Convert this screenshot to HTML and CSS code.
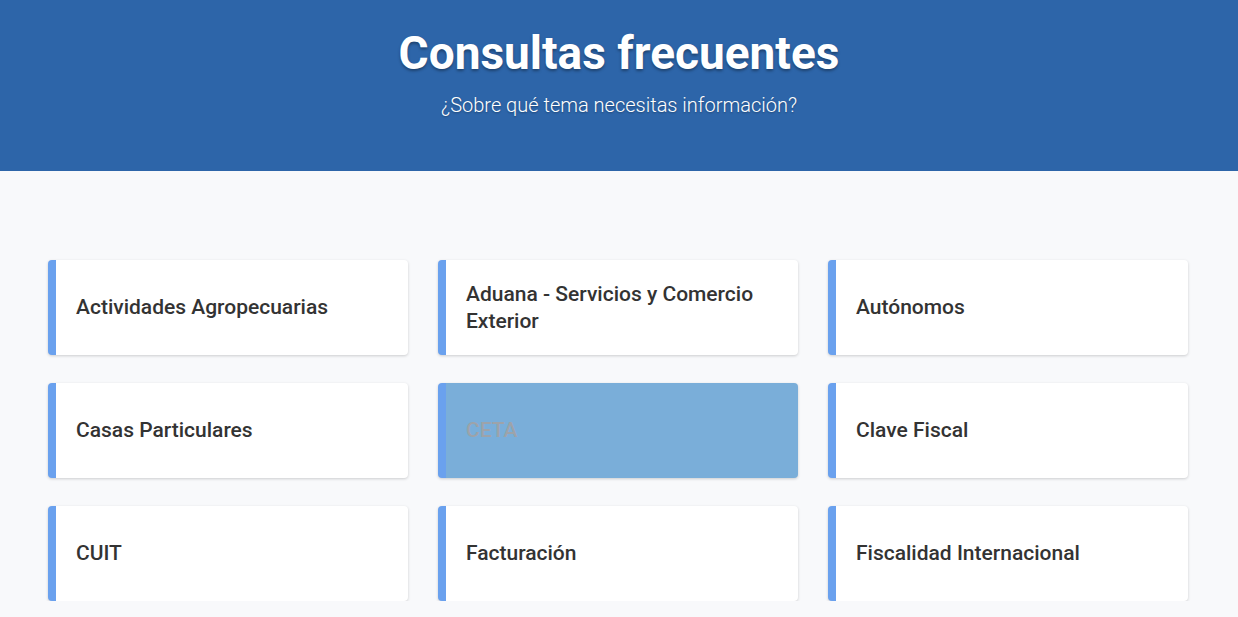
FILE: index.html
```html
<!DOCTYPE html>
<html lang="es">
<head>
<meta charset="utf-8">
<title>Consultas frecuentes</title>
<link rel="stylesheet" href="styles.css">
</head>
<body>
<header class="hero">
  <h1 class="hero-title">Consultas frecuentes</h1>
  <p class="hero-sub">¿Sobre qué tema necesitas información?</p>
</header>
<main class="topics">
  <a class="card" href="#">Actividades Agropecuarias</a>
  <a class="card" href="#">Aduana - Servicios y Comercio Exterior</a>
  <a class="card" href="#">Autónomos</a>
  <a class="card" href="#">Casas Particulares</a>
  <a class="card card-active" href="#">CETA</a>
  <a class="card" href="#">Clave Fiscal</a>
  <a class="card" href="#">CUIT</a>
  <a class="card" href="#">Facturación</a>
  <a class="card" href="#">Fiscalidad Internacional</a>
</main>
</body>
</html>
```
FILE: styles.css
```css
html, body {
  margin: 0;
  padding: 0;
}
body {
  background: #f8f9fb;
  font-family: Roboto, "Liberation Sans", sans-serif;
  overflow: hidden;
}
.hero {
  background: #2d65a9;
  height: 171px;
  box-sizing: border-box;
  padding-top: 26px;
  text-align: center;
  color: #fff;
}
.hero-title {
  margin: 0;
  font-size: 46px;
  font-weight: 700;
  line-height: 54px;
  text-shadow: 0 2px 3px rgba(0, 0, 0, 0.35);
}
.hero-sub {
  margin: 12px 0 0;
  font-size: 20px;
  font-weight: 300;
  line-height: 26px;
  text-shadow: 0 1px 2px rgba(0, 0, 0, 0.3);
}
.topics {
  display: grid;
  grid-template-columns: repeat(3, 360px);
  column-gap: 30px;
  row-gap: 28px;
  padding: 89px 0 0 48px;
}
.card {
  display: flex;
  align-items: center;
  height: 95px;
  box-sizing: border-box;
  padding: 0 24px 0 20px;
  background: #fff;
  border-left: 8px solid #6aa1ee;
  border-radius: 4px;
  box-shadow: 0 1px 3px rgba(0, 0, 0, 0.18);
  color: #333;
  font-size: 21px;
  font-weight: 500;
  line-height: 27px;
  text-decoration: none;
}
.card-active {
  background: #7aaed9;
  color: #9da3aa;
}
```
